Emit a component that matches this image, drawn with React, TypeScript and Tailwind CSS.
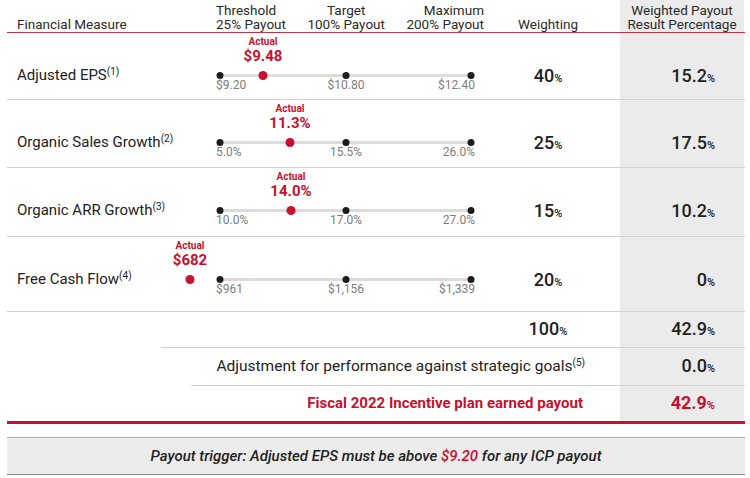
import React from 'react';

interface Measure {
  name: string;
  note: string;
  actual: string;
  pos: number;
  low: string;
  mid: string;
  high: string;
  weight: string;
  result: string;
  rowClass: string;
}

const measures: Measure[] = [
  { name: 'Adjusted EPS', note: '(1)', actual: '$9.48', pos: 58, low: '$9.20', mid: '$10.80', high: '$12.40', weight: '40', result: '15.2', rowClass: 'h-[67px]' },
  { name: 'Organic Sales Growth', note: '(2)', actual: '11.3%', pos: 85, low: '5.0%', mid: '15.5%', high: '26.0%', weight: '25', result: '17.5', rowClass: 'h-[68px]' },
  { name: 'Organic ARR Growth', note: '(3)', actual: '14.0%', pos: 86, low: '10.0%', mid: '17.0%', high: '27.0%', weight: '15', result: '10.2', rowClass: 'h-[69px]' },
  { name: 'Free Cash Flow', note: '(4)', actual: '$682', pos: -15, low: '$961', mid: '$1,156', high: '$1,339', weight: '20', result: '0', rowClass: 'h-[75px]' },
];

const Pct = ({ value, className = '' }: { value: string; className?: string }) => (
  <span className={className}>
    <span className="text-[18px] leading-[20px]">{value}</span>
    <span className="text-[11px]">%</span>
  </span>
);

const Slider = ({ m }: { m: Measure }) => (
  <div className="relative h-full w-[285px]">
    <div className="absolute left-[15px] top-[41px] h-[3px] w-[251px] bg-[#dcdcdc]" />
    {[15, 141, 266].map((x) => (
      <span
        key={x}
        className="absolute top-[39px] h-[7px] w-[7px] -translate-x-1/2 rounded-full bg-[#1c1c1c]"
        style={{ left: x }}
      />
    ))}
    <span className="absolute left-[11px] top-[45px] text-[12px] leading-[14px] text-[#7d7d7d]">{m.low}</span>
    <span className="absolute left-[141px] top-[45px] -translate-x-1/2 text-[12px] leading-[14px] text-[#7d7d7d]">{m.mid}</span>
    <span className="absolute right-[15px] top-[45px] text-[12px] leading-[14px] text-[#7d7d7d]">{m.high}</span>

    {/* actual marker */}
    <div
      className="absolute top-[3px] flex -translate-x-1/2 flex-col items-center font-bold text-[#c8102e]"
      style={{ left: m.pos }}
    >
      <span className="text-[10px] leading-[12px]">Actual</span>
      <span className="text-[15px] leading-[17px]">{m.actual}</span>
    </div>
    <span
      className="absolute top-[38px] h-[9px] w-[9px] -translate-x-1/2 rounded-full bg-[#c8102e]"
      style={{ left: m.pos }}
    />
  </div>
);

export default function App() {
  return (
    <div className="h-[478px] w-[750px] bg-white font-['Roboto',sans-serif] text-[#222]">
      <div className="ml-[7px] w-[738px]">
        {/* header */}
        <div className="flex h-[33px] border-b border-[#b8364b] text-[13.5px] leading-[14px] text-[#2a2a2a]">
          <div className="flex w-[198px] items-end pb-[1px] pl-[10px]">Financial Measure</div>
          <div className="flex w-[285px] items-end justify-between pb-[1px] pl-[11px] pr-[6px]">
            <div>Threshold<br />25% Payout</div>
            <div className="text-center">Target<br />100% Payout</div>
            <div className="text-right">Maximum<br />200% Payout</div>
          </div>
          <div className="flex w-[130px] items-end justify-center pb-[1px] pr-[14px]">Weighting</div>
          <div className="flex w-[124px] items-end justify-center bg-[#ebebeb] pb-[1px] text-center">
            Weighted Payout<br />Result Percentage
          </div>
        </div>

        {/* measures */}
        {measures.map((m) => (
          <div key={m.name} className={`flex border-b border-[#d2d2d2] ${m.rowClass}`}>
            <div className="w-[198px] pl-[10px] pt-[33px] text-[15px] leading-[18px]">
              {m.name}
              <sup className="text-[10px]">{m.note}</sup>
            </div>
            <Slider m={m} />
            <div className="w-[130px] pr-[14px] pt-[32px] text-center font-medium">
              <Pct value={m.weight} />
            </div>
            <div className="w-[124px] bg-[#ebebeb] pr-[29px] pt-[32px] text-right font-medium">
              <Pct value={m.result} />
            </div>
          </div>
        ))}

        {/* total */}
        <div className="flex h-[36px]">
          <div className="w-[154px]" />
          <div className="flex flex-1 border-b border-[#d2d2d2] font-medium">
            <div className="w-[329px]" />
            <div className="flex w-[130px] items-center justify-center pr-[14px]">
              <Pct value="100" />
            </div>
            <div className="flex w-[124px] items-center justify-end bg-[#ebebeb] pr-[29px]">
              <Pct value="42.9" />
            </div>
          </div>
        </div>

        {/* adjustment */}
        <div className="flex h-[38px]">
          <div className="w-[184px]" />
          <div className="flex flex-1 border-b border-[#d2d2d2]">
            <div className="flex w-[429px] items-center justify-end pr-[35px] text-[15.5px]">
              <span>
                Adjustment for performance against strategic goals
                <sup className="text-[10px]">(5)</sup>
              </span>
            </div>
            <div className="flex w-[124px] items-center justify-end bg-[#ebebeb] pr-[29px] font-medium">
              <Pct value="0.0" />
            </div>
          </div>
        </div>

        {/* earned */}
        <div className="flex h-[35px] font-bold text-[#c8102e]">
          <div className="flex w-[613px] items-center justify-end pr-[37px] text-[15px]">
            Fiscal 2022 Incentive plan earned payout
          </div>
          <div className="flex w-[124px] items-center justify-end bg-[#ebebeb] pr-[29px]">
            <Pct value="42.9" />
          </div>
        </div>
        <div className="h-[3px] bg-[#c8102e]" />

        {/* trigger */}
        <div className="mt-[13px] flex h-[38px] items-center justify-center border-t border-b border-t-[#b0b0b0] border-b-[#8a8a8a] bg-[#ececec] text-[15px] font-medium italic text-[#222]">
          Payout trigger: Adjusted EPS must be above&nbsp;<span className="text-[#c8102e]">$9.20</span>&nbsp;for any ICP payout
        </div>
      </div>
    </div>
  );
}
